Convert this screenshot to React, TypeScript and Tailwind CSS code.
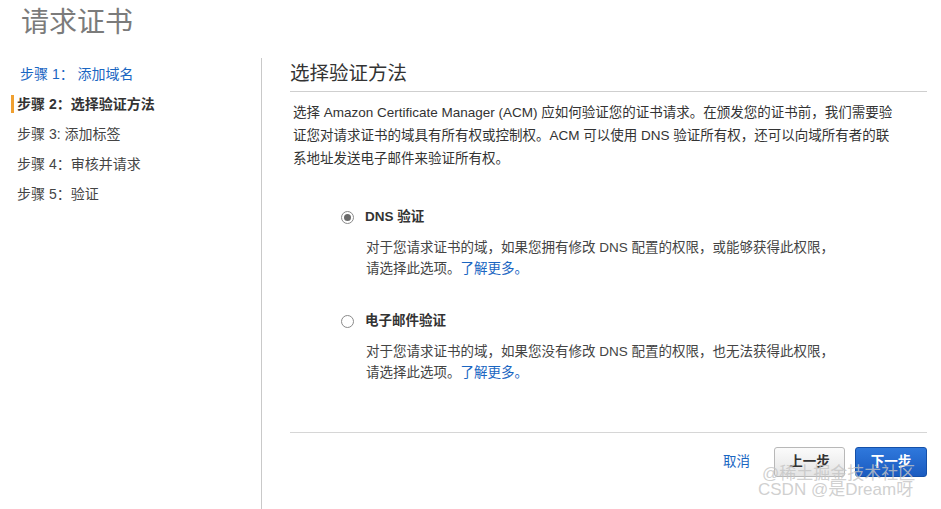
import React from "react";

const font = "font-['Liberation_Sans','Noto_Sans_CJK_SC',sans-serif]";

const steps = [
  { label: "步骤 1： 添加域名", state: "done" },
  { label: "步骤 2：选择验证方法", state: "active" },
  { label: "步骤 3: 添加标签", state: "todo" },
  { label: "步骤 4：审核并请求", state: "todo" },
  { label: "步骤 5：验证", state: "todo" },
];

function Radio({ checked }: { checked: boolean }) {
  return (
    <span className="flex h-[13px] w-[13px] items-center justify-center rounded-full border border-[#8a8a8a] bg-white">
      {checked && <span className="h-[7px] w-[7px] rounded-full bg-[#6b6b6b]" />}
    </span>
  );
}

function Option({ title, desc, checked }: { title: string; desc: string; checked: boolean }) {
  return (
    <div>
      <div className="flex h-[20px] items-center pl-[51px]">
        <Radio checked={checked} />
        <span className="ml-[11px] text-[13.5px] font-bold text-[#333]">{title}</span>
      </div>
      <div className="mt-[10px] pl-[76px] text-[13.5px] leading-[21px] text-[#444]">
        <div>{desc}</div>
        <div>
          请选择此选项。<span className="text-[#1a66c2]">了解更多。</span>
        </div>
      </div>
    </div>
  );
}

export default function App() {
  return (
    <div className={`relative h-[509px] w-[941px] overflow-hidden bg-white ${font}`}>
      <h1 className="h-[58px] pl-[21px] pt-[3px] text-[28px] leading-[40px] text-[#7b7b7b]">请求证书</h1>
      <div className="flex h-[451px]">
        <nav className="w-[262px] border-r border-[#c9c9c9] pt-[1px] text-[14px]">
          {steps.map((s) => (
            <div key={s.label} className="flex h-[30px] items-center">
              <span
                className={
                  s.state === "active" ? "ml-[11px] h-[18px] w-[3px] bg-[#f0a030]" : "ml-[11px] w-[3px]"
                }
              />
              <span
                className={
                  s.state === "done"
                    ? "ml-[6px] whitespace-pre text-[#1a66c2]"
                    : s.state === "active"
                    ? "ml-[3px] font-bold text-[#333]"
                    : "ml-[3px] text-[#444]"
                }
              >
                {s.label}
              </span>
            </div>
          ))}
        </nav>
        <main className="flex-1 pl-[28px] pr-[14px]">
          <h2 className="h-[34px] border-b border-[#cfcfcf] pb-[3px] text-[19.5px] leading-[30px] text-[#333]">
            选择验证方法
          </h2>
          <p className="mt-[9px] pl-[3px] text-[13.5px] leading-[23px] text-[#333]">
            <span className="block">
              选择 Amazon Certificate Manager (ACM) 应如何验证您的证书请求。在颁发您的证书前，我们需要验
            </span>
            <span className="block">
              证您对请求证书的域具有所有权或控制权。ACM 可以使用 DNS 验证所有权，还可以向域所有者的联
            </span>
            <span className="block">系地址发送电子邮件来验证所有权。</span>
          </p>
          <div className="mt-[37px]">
            <Option
              checked
              title="DNS 验证"
              desc="对于您请求证书的域，如果您拥有修改 DNS 配置的权限，或能够获得此权限，"
            />
          </div>
          <div className="mt-[32px]">
            <Option
              checked={false}
              title="电子邮件验证"
              desc="对于您请求证书的域，如果您没有修改 DNS 配置的权限，也无法获得此权限，"
            />
          </div>
          <div className="mt-[49px] border-t border-[#d6d6d6]" />
          <div className="mt-[14px] flex items-center justify-end">
            <span className="mr-[24px] text-[13.5px] text-[#1a66c2]">取消</span>
            <button className="h-[30px] w-[71px] rounded-[3px] border border-[#b8b8b8] bg-gradient-to-b from-[#fbfbfb] to-[#e4e4e4] text-[13.5px] font-bold text-[#333]">
              上一步
            </button>
            <button className="ml-[10px] h-[30px] w-[72px] rounded-[3px] border border-[#1550a8] bg-gradient-to-b from-[#2f78dc] to-[#1a5bc0] text-[13.5px] font-bold text-white">
              下一步
            </button>
          </div>
        </main>
      </div>
      <div className="pointer-events-none absolute left-[758px] top-[466px] text-[17px] leading-[16px] text-[#c4c4c4]/80">
        <div className="pl-[4px]">@稀土掘金技术社区</div>
        <div>CSDN @是Dream呀</div>
      </div>
    </div>
  );
}
